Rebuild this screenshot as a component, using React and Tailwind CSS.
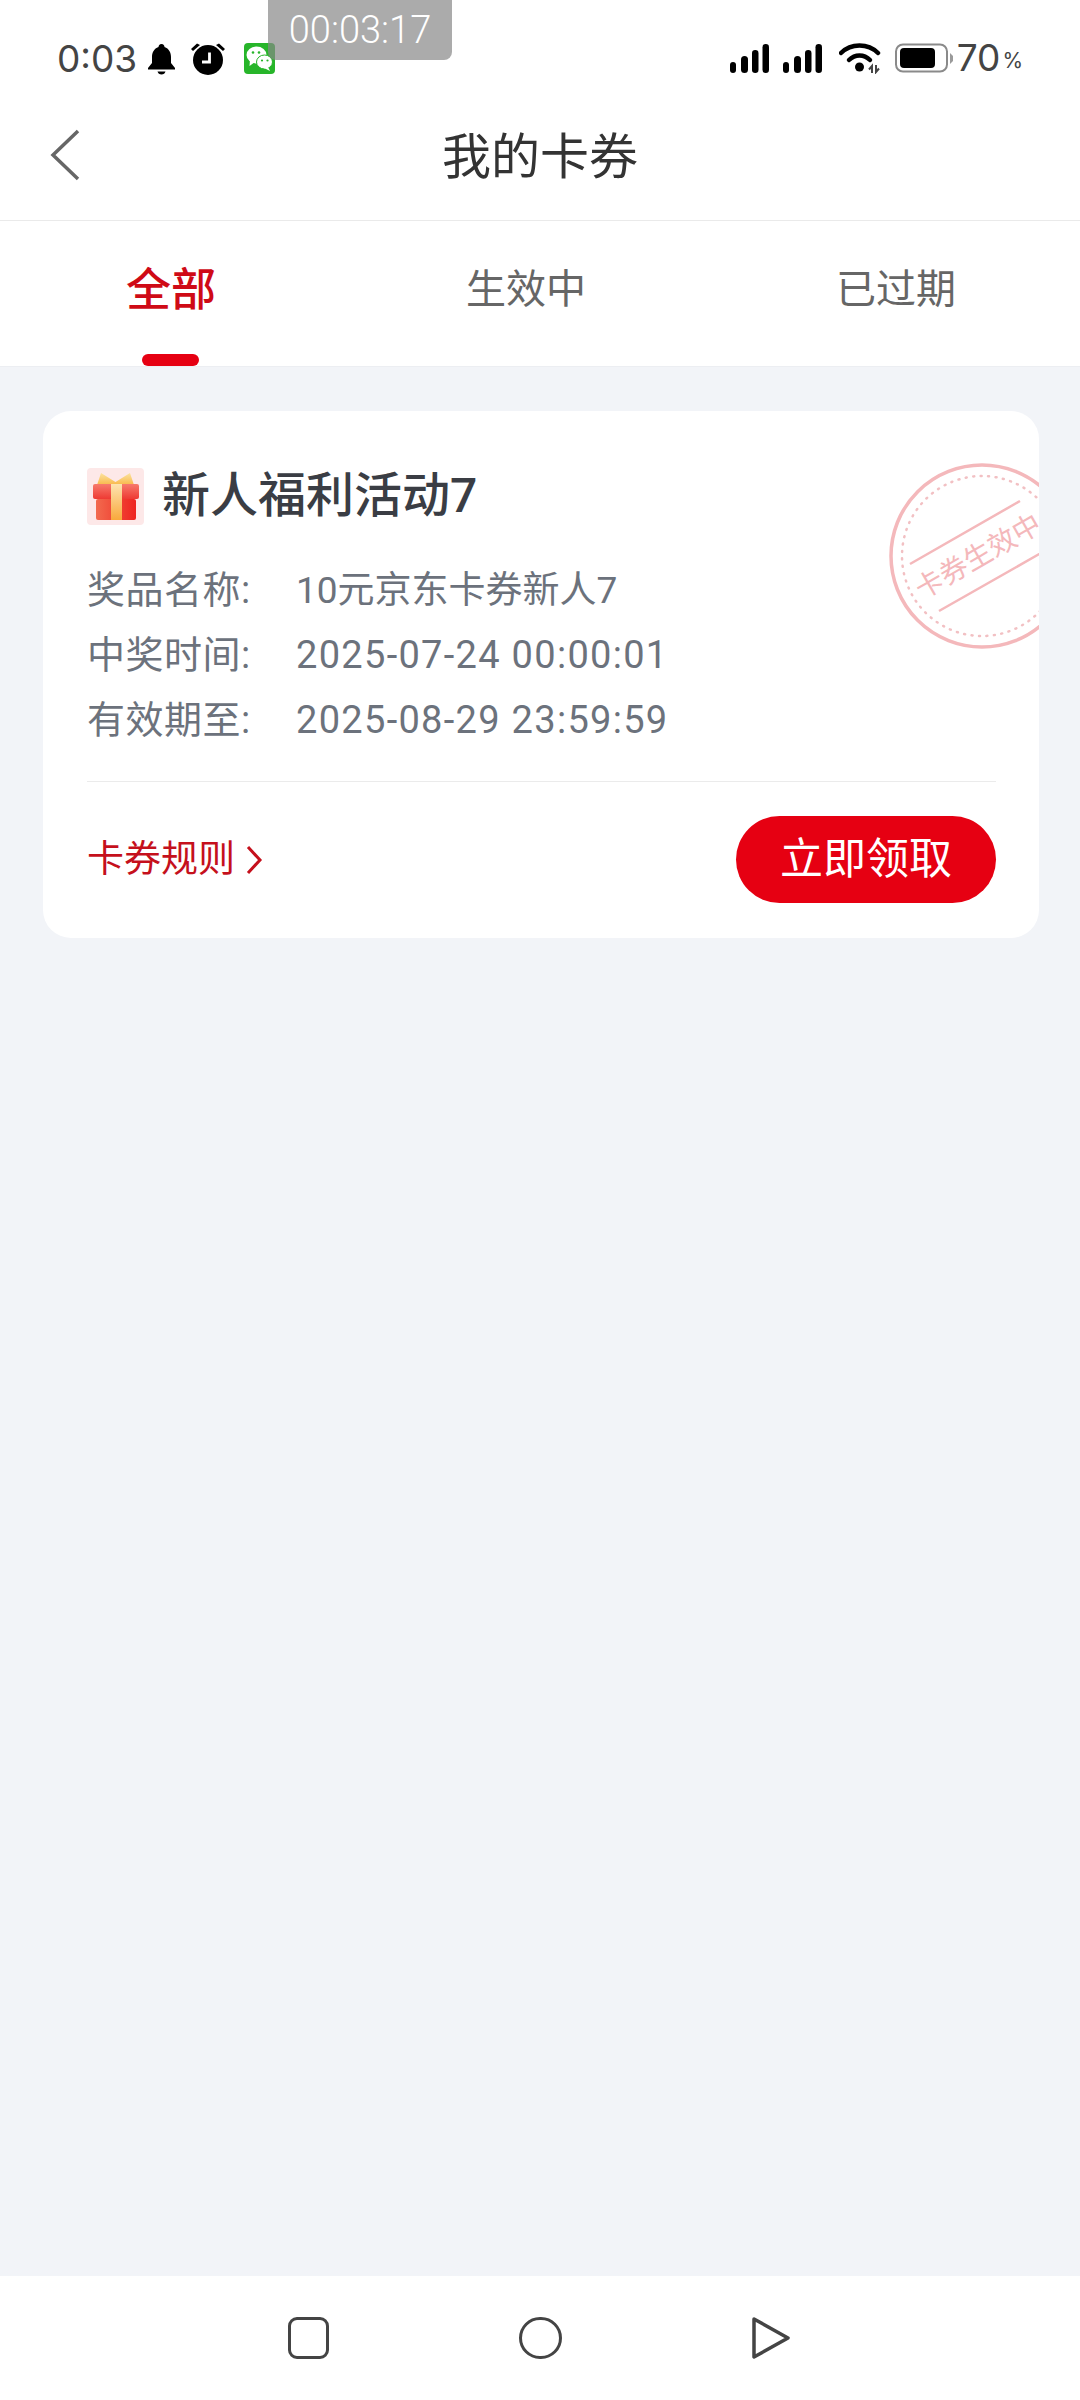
import React from "react";

const FONT = "font-['Roboto','Noto_Sans_CJK_SC',sans-serif]";
const STATUS_FONT = "font-['Inter','Noto_Sans_CJK_SC',sans-serif]";

const SignalIcon = () => (
  <svg width="39" height="29" viewBox="0 0 39 29" fill="#000">
    <rect x="0" y="18" width="6" height="11" rx="3" />
    <rect x="11" y="12" width="7" height="17" rx="3.5" />
    <rect x="22" y="6" width="6.5" height="23" rx="3.2" />
    <rect x="32.500" y="0" width="6.5" height="29" rx="3.2" />
  </svg>
);

const WifiIcon = () => (
  <svg width="44" height="32" viewBox="0 0 44 32" fill="none">
    <path d="M2 11 C12 1 29 1 39 11" stroke="#000" strokeWidth="4.500" strokeLinecap="round" />
    <path d="M10 18 C16 12 25 12 31 18" stroke="#000" strokeWidth="4.500" strokeLinecap="round" />
    <circle cx="20.500" cy="25" r="4.500" fill="#000" />
    <path d="M33 31V24L30 27.500M37 23V30L40 26.500" stroke="#444" strokeWidth="2" />
  </svg>
);

const BatteryIcon = () => (
  <svg width="59" height="30" viewBox="0 0 59 30">
    <rect x="1" y="1.500" width="51" height="27" rx="7" fill="none" stroke="#8a8a8a" strokeWidth="2" />
    <rect x="5" y="5" width="35" height="20" rx="4" fill="#000" />
    <path d="M55 10 L58 13 V18 L55 21 Z" fill="#9a9a9a" />
  </svg>
);

const BellIcon = () => (
  <svg width="29" height="32" viewBox="0 0 29 32" fill="#000">
    <path d="M14.500 1 C16.500 1 17.500 2.500 17.500 4 C22 5.500 24 9.500 24 14 V20 L28 25 V26.500 H1 V25 L5 20 V14 C5 9.500 7 5.500 11.500 4 C11.500 2.500 12.500 1 14.500 1 Z" />
    <path d="M10.500 28.500 H18.500 C18 30.500 16.500 31.500 14.500 31.500 C12.500 31.500 11 30.500 10.500 28.500 Z" />
  </svg>
);

const AlarmIcon = () => (
  <svg width="36" height="33" viewBox="0 0 36 33" fill="none">
    <circle cx="18" cy="18" r="15" fill="#000" />
    <path d="M1 7 L7 1.500 L10 3 L3 9 Z M35 7 L29 1.500 L26 3 L33 9 Z" fill="#000" />
    <path d="M19.500 10.500 V20 H12" stroke="#fff" strokeWidth="2.800" />
  </svg>
);

const WechatIcon = () => (
  <svg width="31" height="31" viewBox="0 0 31 31">
    <rect width="31" height="31" rx="4" fill="#27b52a" />
    <ellipse cx="12.500" cy="12" rx="10" ry="8.500" fill="#fff" />
    <path d="M6 17 L5.500 23 L11 19 Z" fill="#fff" />
    <ellipse cx="20.500" cy="19" rx="8" ry="7" fill="#fff" stroke="#27b52a" strokeWidth="1" />
    <path d="M24 24 L26 28 L20 25 Z" fill="#fff" />
    <circle cx="9" cy="9.500" r="1.300" fill="#27b52a" />
    <circle cx="15" cy="9.500" r="1.300" fill="#27b52a" />
    <circle cx="18" cy="17.500" r="1.100" fill="#27b52a" />
    <circle cx="23.500" cy="17.500" r="1.100" fill="#27b52a" />
  </svg>
);

const GiftIcon = () => (
  <svg width="57" height="57" viewBox="0 0 57 57">
    <defs>
      <linearGradient id="bow" x1="0" y1="0" x2="0" y2="1">
        <stop offset="0" stopColor="#fbe3a0" />
        <stop offset="1" stopColor="#f9b84a" />
      </linearGradient>
      <linearGradient id="lid" x1="0" y1="0" x2="0" y2="1">
        <stop offset="0" stopColor="#f77a6c" />
        <stop offset="1" stopColor="#ee3a33" />
      </linearGradient>
      <linearGradient id="body" x1="0" y1="0" x2="1" y2="0">
        <stop offset="0" stopColor="#f26a4e" />
        <stop offset="1" stopColor="#ee2420" />
      </linearGradient>
      <linearGradient id="ribbon" x1="0" y1="0" x2="0" y2="1">
        <stop offset="0" stopColor="#fde3b0" />
        <stop offset="1" stopColor="#f9a93c" />
      </linearGradient>
    </defs>
    <rect width="57" height="57" rx="4" fill="#fde8e8" />
    <path d="M14 5 L28.500 14 L43 5 L47 17 H10 Z" fill="url(#bow)" />
    <rect x="6" y="16" width="46" height="15" rx="2" fill="url(#lid)" />
    <rect x="9" y="31" width="40" height="21" rx="2" fill="url(#body)" />
    <rect x="24" y="16" width="11" height="36" fill="url(#ribbon)" />
  </svg>
);

const Stamp = () => (
  <svg width="190" height="190" viewBox="0 0 190 190" className="absolute left-[845px] top-[50px]" fill="none">
    <circle cx="94" cy="95" r="91" stroke="#f4b8bb" strokeWidth="3.500" />
    <circle cx="94" cy="95" r="80" stroke="#f2c0c3" strokeWidth="2.500" strokeDasharray="1 6.500" strokeLinecap="round" />
    <path d="M22 103 L132 40 M51 150 L160 88" stroke="#f4b8bb" strokeWidth="2.500" />
    <text
      x="90"
      y="105"
      textAnchor="middle"
      transform="rotate(-30 90 95)"
      fill="#f4b8bb"
      fontSize="28"
      fontFamily="'Noto Sans CJK SC', sans-serif"
    >
      卡券生效中
    </text>
  </svg>
);

const InfoRow = ({ label, value, valueClass }) => (
  <div className="flex h-[65px] items-center text-[38px] text-[#6c727c]">
    <span className="w-[209px] shrink-0 tracking-[0.5px]">{label}</span>
    <span className={valueClass}>{value}</span>
  </div>
);

const NavButtons = () => (
  <div className="flex h-[124px] shrink-0 items-start justify-center gap-[190px] bg-white pr-[2px] pt-[41px]">
    <div className="h-[42px] w-[41px] rounded-[9px] border-[3px] border-[#444]" />
    <div className="h-[42px] w-[43px] rounded-full border-[3px] border-[#444]" />
    <svg width="38" height="42" viewBox="0 0 38 42" fill="none">
      <path d="M2 2 L36 21 L2 40 Z" stroke="#444" strokeWidth="3.500" strokeLinejoin="round" />
    </svg>
  </div>
);

export default function App() {
  return (
    <div className={`relative flex h-[2400px] w-[1080px] flex-col overflow-hidden bg-[#f2f4f8] ${FONT}`}>
      {/* status bar */}
      <div className={`flex h-[100px] shrink-0 items-start justify-between bg-white pl-[57px] pr-[57px] pt-[42px] ${STATUS_FONT}`}>
        <div className="flex items-center">
          <span className="text-[37px] leading-[32px] text-[#444]">0:03</span>
          <span className="ml-[10px] flex"><BellIcon /></span>
          <span className="ml-[14px] flex"><AlarmIcon /></span>
          <span className="ml-[18px] flex"><WechatIcon /></span>
        </div>
        <div className="flex items-center">
          <SignalIcon />
          <span className="ml-[14px] flex"><SignalIcon /></span>
          <span className="ml-[17px] flex"><WifiIcon /></span>
          <span className="ml-[12px] flex"><BatteryIcon /></span>
          <span className="ml-[3px] text-[37px] leading-[32px] text-[#444]">70</span>
          <span className="ml-[2px] mt-[6px] text-[21px] leading-[24px] text-[#444]">%</span>
        </div>
      </div>

      {/* recording timer */}
      <div className="absolute left-[268px] top-0 flex h-[60px] w-[184px] items-center justify-center rounded-b-[8px] bg-[#888]/70 text-[38px] font-light text-white">
        00:03:17
      </div>

      {/* header */}
      <div className="relative flex h-[121px] shrink-0 items-center justify-center border-b border-[#eaeaea] bg-white pb-[4px]">
        <svg width="30" height="52" viewBox="0 0 30 52" fill="none" className="absolute left-[50px] top-[29px]">
          <path d="M28 2 L3 26 L28 50" stroke="#666" strokeWidth="3.500" />
        </svg>
        <span className="text-[49px] leading-[64px] text-[#333]">我的卡券</span>
      </div>

      {/* tabs */}
      <div className="relative flex h-[146px] shrink-0 items-start justify-between border-b border-[#eceef2] bg-white pl-[126px] pr-[124px] pt-[37px]">
        <div className="pt-[3px] text-[45px] font-medium leading-[60px] text-[#cf0a16]">全部</div>
        <div className="pt-[2px] text-[40px] leading-[60px] text-[#666]">生效中</div>
        <div className="pt-[2px] text-[40px] leading-[60px] text-[#666]">已过期</div>
        <div className="absolute bottom-0 left-[142px] h-[12px] w-[57px] rounded-full bg-[#e60012]" />
      </div>

      {/* coupon list */}
      <div className="flex-1 px-[43px] pt-[44px]">
        <div className="relative h-[527px] w-[996px] overflow-hidden rounded-[28px] bg-white px-[44px] pt-[56px]">
          <Stamp />
          <div className="flex h-[58px] items-center">
            <GiftIcon />
            <span className="ml-[18px] text-[48px] font-medium leading-[58px] text-[#3a3d44]">新人福利活动7</span>
          </div>
          <div className="mt-[33px]">
            <InfoRow label="奖品名称:" value="10元京东卡券新人7" valueClass="text-[37px]" />
            <InfoRow label="中奖时间:" value="2025-07-24 00:00:01" valueClass="tracking-[1.300px]" />
            <InfoRow label="有效期至:" value="2025-08-29 23:59:59" valueClass="tracking-[1.300px]" />
          </div>
          <div className="mt-[28px] h-px w-[909px] bg-[#ebebeb]" />
          <div className="flex h-[155px] w-[909px] items-start justify-between pt-[34px]">
            <div className="flex h-[87px] items-center text-[37px] text-[#c5101c]">
              卡券规则
              <svg width="18" height="30" viewBox="0 0 18 30" fill="none" className="ml-[10px]">
                <path d="M3 2 L15 15 L3 28" stroke="#c5101c" strokeWidth="3" />
              </svg>
            </div>
            <button className="h-[87px] w-[260px] rounded-full bg-[#e60012] text-[43px] text-white">立即领取</button>
          </div>
        </div>
      </div>

      <NavButtons />
    </div>
  );
}
